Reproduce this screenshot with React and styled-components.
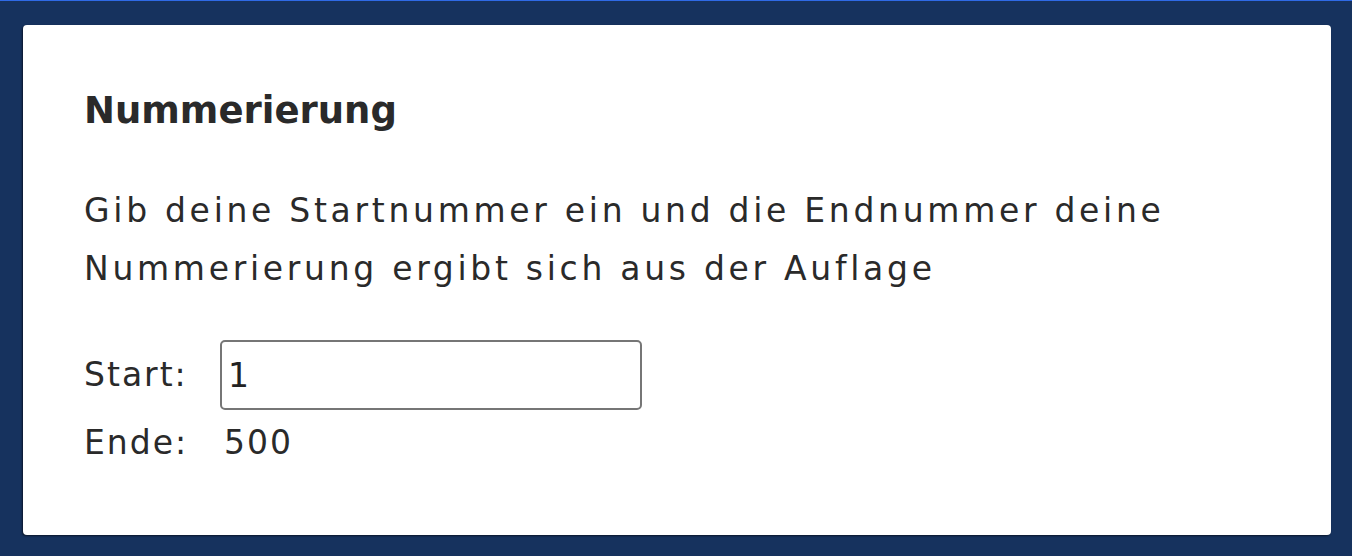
import React from 'react';
import styled, { createGlobalStyle } from 'styled-components';

const GlobalStyle = createGlobalStyle`
  html, body {
    margin: 0;
    padding: 0;
    background: #16325e;
  }
  body {
    font-family: "DejaVu Sans", "Open Sans", sans-serif;
    color: #2a2a2a;
  }
`;

const Page = styled.div`
  box-sizing: border-box;
  height: 100vh;
  border-top: 1px solid #2f6ae6;
  padding: 24px 21px 21px 23px;
  display: flex;
`;

const Card = styled.section`
  flex: 1;
  background: #ffffff;
  border-radius: 4px;
  box-shadow: -1px 1px 2px rgba(0, 0, 0, 0.55);
  padding: 58px 61px;
`;

const Title = styled.h2`
  margin: 0 0 43px;
  font-size: 37px;
  line-height: 56px;
  font-weight: 700;
  color: #2a2a2a;
`;

const Intro = styled.p`
  margin: 0 0 42px;
  font-size: 33px;
  line-height: 58px;
  letter-spacing: 3.7px;
  max-width: 1120px;
`;

const Fields = styled.div`
  display: grid;
  grid-template-columns: 136px auto;
  align-items: center;
  row-gap: 4px;
  font-size: 33px;
  line-height: 58px;
  letter-spacing: 2px;
`;

const Label = styled.span``;

const Value = styled.span`
  padding-left: 4px;
`;

const NumberInput = styled.input`
  box-sizing: border-box;
  width: 422px;
  height: 70px;
  border: 2px solid #767676;
  border-radius: 5px;
  padding: 0 6px;
  font: inherit;
  letter-spacing: inherit;
  color: #222;
  outline: none;
`;

export default function App() {
  return (
    <>
      <GlobalStyle />
      <Page>
        <Card>
          <Title>Nummerierung</Title>
          <Intro>
            Gib deine Startnummer ein und die Endnummer deine Nummerierung ergibt sich aus der Auflage
          </Intro>
          <Fields>
            <Label>Start:</Label>
            <div>
              <NumberInput type="text" defaultValue="1" />
            </div>
            <Label>Ende:</Label>
            <Value>500</Value>
          </Fields>
        </Card>
      </Page>
    </>
  );
}
